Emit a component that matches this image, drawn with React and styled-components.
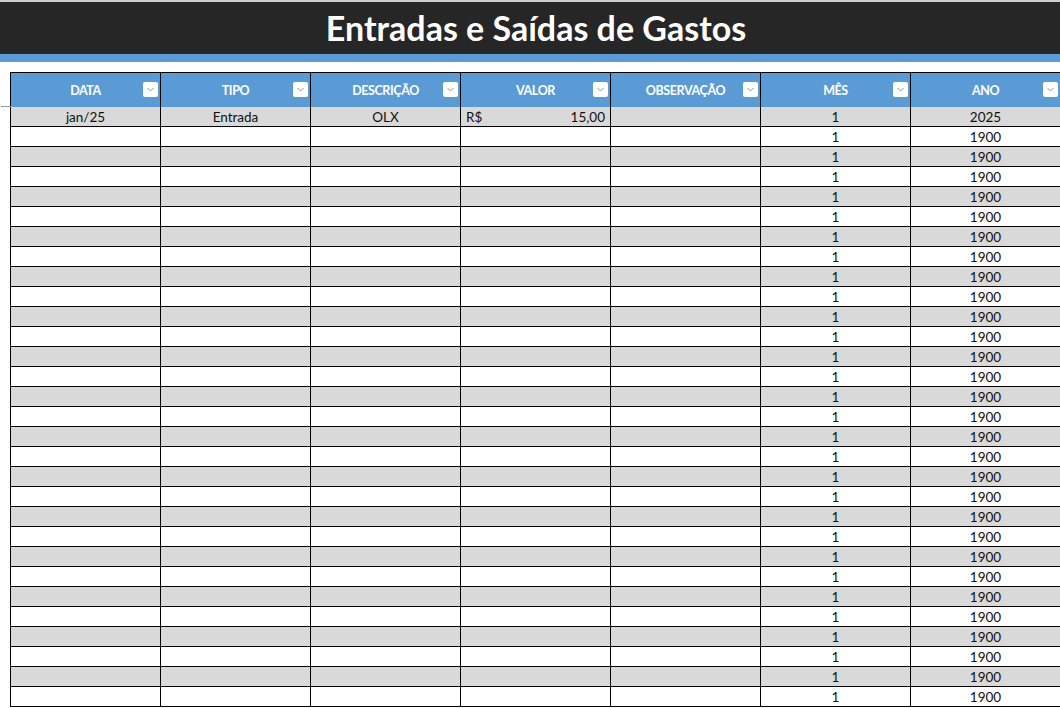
import React from 'react'
import styled, { createGlobalStyle } from 'styled-components'

const GlobalStyle = createGlobalStyle`
  html, body {
    margin: 0;
    padding: 0;
    background: #fff;
    overflow: hidden;
  }
  body {
    font-family: Lato, "Open Sans", sans-serif;
  }
`

const Page = styled.div`
  width: 1060px;
  height: 708px;
  overflow: hidden;
  border-top: 2px solid #cfcfcf;
  box-sizing: border-box;
`

const TitleBar = styled.header`
  height: 52px;
  background: #262626;
  display: flex;
  align-items: center;
  justify-content: center;
`

const Title = styled.h1`
  margin: 0 0 2px;
  color: #fff;
  font-family: Lato, sans-serif;
  font-weight: 700;
  font-size: 34px;
  letter-spacing: 0;
  padding-left: 12px;
`

const Stripe = styled.div`
  height: 8px;
  background: #5b9bd5;
  margin-bottom: 10px;
`

const Sheet = styled.div`
  position: relative;
  margin-left: 10px;
  display: grid;
  grid-template-columns: repeat(7, 150px);
  border-top: 1px solid #000;
  border-left: 1px solid #000;

  &::before {
    content: '';
    position: absolute;
    left: -10px;
    top: 33px;
    width: 12px;
    height: 1px;
    background: #9a9a9a;
  }
`

const HeadCell = styled.div`
  position: relative;
  height: 34px;
  box-sizing: border-box;
  background: #5b9bd5;
  border-right: 1px solid #000;
  display: flex;
  align-items: center;
  justify-content: center;
  color: #fff;
  font-weight: 700;
  font-size: 12.5px;
  letter-spacing: -0.4px;
`

const FilterButton = styled.span`
  position: absolute;
  right: 2px;
  top: 9px;
  width: 15px;
  height: 15px;
  background: #fff;
  border-radius: 2px;
  display: flex;
  align-items: center;
  justify-content: center;
`

const Cell = styled.div`
  height: 20px;
  box-sizing: border-box;
  background: ${p => (p.$shaded ? '#d9d9d9' : '#fff')};
  border-right: 1px solid #000;
  border-bottom: 1px solid #000;
  display: flex;
  align-items: center;
  justify-content: ${p => p.$align || 'center'};
  padding: 0 5px;
  font-size: 13.5px;
  color: #111;
  white-space: nowrap;
`

const Money = styled.span`
  display: flex;
  justify-content: space-between;
  width: 100%;
`

const Chevron = () => (
  <svg width="7" height="5" viewBox="0 0 7 5">
    <path d="M0.5 1 L3.5 4 L6.5 1" fill="none" stroke="#8a8a8a" strokeWidth="0.9" />
  </svg>
)

const headers = ['DATA', 'TIPO', 'DESCRIÇÃO', 'VALOR', 'OBSERVAÇÃO', 'MÊS', 'ANO']

const rows = Array.from({ length: 30 }, (_, i) =>
  i === 0
    ? ['jan/25', 'Entrada', 'OLX', 'money', '', '1', '2025']
    : ['', '', '', '', '', '1', '1900']
)

const App = () => (
  <>
    <GlobalStyle />
    <Page>
      <TitleBar>
        <Title>Entradas e Saídas de Gastos</Title>
      </TitleBar>
      <Stripe />
      <Sheet>
        {headers.map(h => (
          <HeadCell key={h}>
            {h}
            <FilterButton>
              <Chevron />
            </FilterButton>
          </HeadCell>
        ))}
        {rows.map((row, r) =>
          row.map((val, c) => (
            <Cell key={r + '-' + c} $shaded={r % 2 === 0}>
              {val === 'money' ? (
                <Money>
                  <span>R$</span>
                  <span>15,00</span>
                </Money>
              ) : (
                val
              )}
            </Cell>
          ))
        )}
      </Sheet>
    </Page>
  </>
)

export default App
